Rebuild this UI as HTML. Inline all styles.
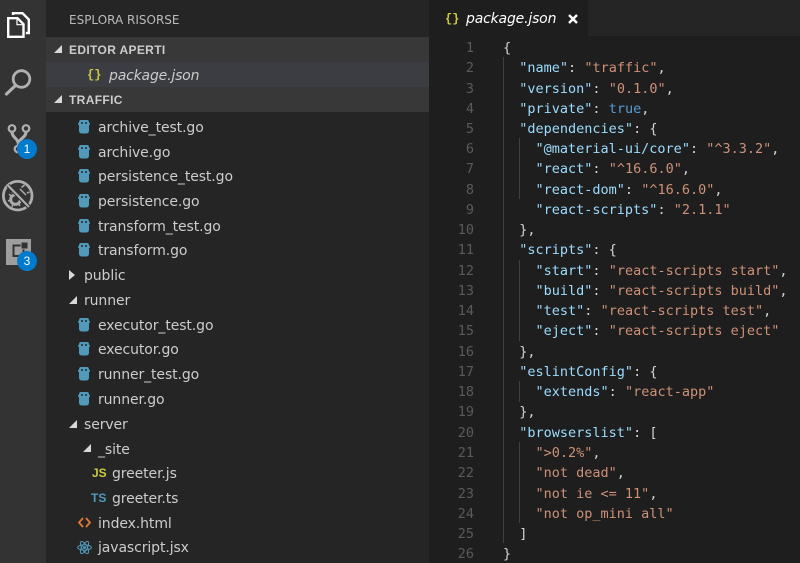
<!DOCTYPE html>
<html><head><meta charset="utf-8"><style>
html,body{margin:0;padding:0;background:#1e1e1e}
#app{position:relative;width:800px;height:563px;overflow:hidden;background:#1e1e1e;font-family:"DejaVu Sans",sans-serif}
.abs{position:absolute}
.row{position:absolute;color:#ccc;font-size:14px;line-height:20px;white-space:nowrap;font-family:"DejaVu Sans",sans-serif;letter-spacing:-.1px;margin-top:1px}
.ln{position:absolute;left:430px;width:44px;text-align:right;color:#5a5a5a;font:13.5px/20px "DejaVu Sans Mono",monospace;margin-top:1px}
.c{position:absolute;left:503px;color:#d4d4d4;font:13.5px/20px "DejaVu Sans Mono",monospace;white-space:pre;margin-top:1px}
.k{color:#9cdcfe}.s{color:#ce9178}.b{color:#569cd6}
.g{position:absolute;width:1px;background:#404040}
.tri{position:absolute;width:0;height:0}
.open{border-left:8px solid transparent;border-bottom:8px solid #d8d8d8}
.go{position:absolute;width:12px;height:16px}
.badge{position:absolute;width:20px;height:20px;border-radius:50%;background:#007acc;color:#fff;font:12px/20px "Liberation Sans",sans-serif;text-align:center}
.hd{font:bold 12px/20px "Liberation Sans",sans-serif;letter-spacing:.35px}
.br{font:bold 12px/20px "Liberation Mono",monospace;color:#cbcb41;letter-spacing:0}
</style></head><body><div id="app">
<div class="abs" style="left:0;top:0;width:46px;height:563px;background:#333"></div>
<div class="abs" style="left:46px;top:0;width:383px;height:563px;background:#252526"></div>
<div class="abs" style="left:588px;top:0;width:212px;height:36px;background:#252526"></div>

<svg class="abs" style="left:0;top:0" width="46" height="280" fill="none">
<path d="M13 15v-1.800h9.500l6.300 6.300v13.500h-3" stroke="#fff" stroke-width="2.400"/>
<path d="M8.200 18.200h9.300l6 6v12.600H8.200z" stroke="#fff" stroke-width="2.400"/>
<path d="M17 18.500v6.200h6.500" stroke="#fff" stroke-width="1.200"/>
<circle cx="21.500" cy="79" r="8.300" stroke="#b0b0b0" stroke-width="2.800"/>
<path d="M15.500 85.500L6.500 94" stroke="#b0b0b0" stroke-width="3.200" stroke-linecap="round"/>
<circle cx="12" cy="128.500" r="3.300" stroke="#b0b0b0" stroke-width="2.200"/>
<circle cx="26" cy="128.500" r="3.300" stroke="#b0b0b0" stroke-width="2.200"/>
<circle cx="18" cy="149" r="3.300" stroke="#b0b0b0" stroke-width="2.200"/>
<path d="M12 132c0 6 6.500 6 6.500 13M26 132c0 6-7.500 6-7.500 13" stroke="#b0b0b0" stroke-width="3"/>
<circle cx="17.700" cy="195.700" r="14.300" stroke="#adadad" stroke-width="2.800"/>
<circle cx="15.500" cy="199.500" r="4.800" stroke="#adadad" stroke-width="3"/>
<path d="M20 189l6 6M21.500 187.500l3-2.500M27 193l2.500-1M13 190l-1 3M9 194l2 2M8 201l3-1M12 207l1-3M20 206l-2-3M25 202l-4-1" stroke="#adadad" stroke-width="1.500"/>
<path d="M8 185.500l21 21.500" stroke="#333" stroke-width="4.200"/>
<path d="M8 185.500l21 21.500" stroke="#adadad" stroke-width="2.200"/>
<rect x="6" y="239" width="25" height="26" fill="#9e9e9e"/>
<rect x="13.500" y="245.500" width="10" height="10.500" fill="#9e9e9e" stroke="#333" stroke-width="2"/>
<rect x="21" y="242" width="7" height="7" fill="#333" stroke="#9e9e9e" stroke-width="1"/>
</svg>
<div class="badge" style="left:17px;top:139px">1</div>
<div class="badge" style="left:17px;top:251px">3</div>

<div class="row" style="left:69px;top:9px;font-size:12px;letter-spacing:0;color:#bbb">ESPLORA RISORSE</div>
<div class="abs" style="left:46px;top:37px;width:383px;height:25px;background:#383839"></div>
<div class="abs" style="left:46px;top:62px;width:383px;height:25px;background:#3c3d43"></div>
<div class="abs" style="left:46px;top:87px;width:383px;height:25px;background:#383839"></div>
<div class="tri open" style="left:54px;top:45px"></div>
<div class="row hd" style="left:69px;top:39px">EDITOR APERTI</div>
<div class="row br" style="left:87px;top:64px">{}</div>
<div class="row" style="left:109px;top:65px;font-style:italic;color:#ccc;letter-spacing:-.18px">package.json</div>
<div class="tri open" style="left:54px;top:95px"></div>
<div class="row hd" style="left:69px;top:89px">TRAFFIC</div>

<svg width="0" height="0" style="position:absolute"><defs><g id="go"><path d="M1 3.500Q1 1 3 1h6q2 0 2 2.500l1 1v1l-1 .5v5.500q0 3-3 3H4q-3 0-3-3V6L0 5.500v-1z" fill="#519aba"/><circle cx="4" cy="4" r="1" fill="#1e2a30"/><circle cx="8" cy="4" r="1" fill="#1e2a30"/></g></defs></svg>

<svg class="go" style="left:78px;top:119px" viewBox="0 0 12 16"><use href="#go"/></svg><div class="row" style="left:98px;top:117px">archive_test.go</div>
<svg class="go" style="left:78px;top:144px" viewBox="0 0 12 16"><use href="#go"/></svg><div class="row" style="left:98px;top:142px">archive.go</div>
<svg class="go" style="left:78px;top:168px" viewBox="0 0 12 16"><use href="#go"/></svg><div class="row" style="left:98px;top:166px">persistence_test.go</div>
<svg class="go" style="left:78px;top:193px" viewBox="0 0 12 16"><use href="#go"/></svg><div class="row" style="left:98px;top:191px">persistence.go</div>
<svg class="go" style="left:78px;top:218px" viewBox="0 0 12 16"><use href="#go"/></svg><div class="row" style="left:98px;top:216px">transform_test.go</div>
<svg class="go" style="left:78px;top:242px" viewBox="0 0 12 16"><use href="#go"/></svg><div class="row" style="left:98px;top:240px">transform.go</div>
<div class="tri" style="left:69px;top:270px;border-top:5px solid transparent;border-bottom:5px solid transparent;border-left:6px solid #d8d8d8"></div>
<div class="row" style="left:84px;top:265px">public</div>
<div class="tri open" style="left:69px;top:296px"></div>
<div class="row" style="left:84px;top:290px">runner</div>
<svg class="go" style="left:78px;top:317px" viewBox="0 0 12 16"><use href="#go"/></svg><div class="row" style="left:98px;top:315px">executor_test.go</div>
<svg class="go" style="left:78px;top:341px" viewBox="0 0 12 16"><use href="#go"/></svg><div class="row" style="left:98px;top:339px">executor.go</div>
<svg class="go" style="left:78px;top:366px" viewBox="0 0 12 16"><use href="#go"/></svg><div class="row" style="left:98px;top:364px">runner_test.go</div>
<svg class="go" style="left:78px;top:391px" viewBox="0 0 12 16"><use href="#go"/></svg><div class="row" style="left:98px;top:389px">runner.go</div>
<div class="tri open" style="left:69px;top:420px"></div>
<div class="row" style="left:84px;top:414px">server</div>
<div class="tri open" style="left:83px;top:444px"></div>
<div class="row" style="left:98px;top:439px">_site</div>
<div class="row" style="left:92px;top:462px;font:bold 12px/20px 'Liberation Sans',sans-serif;color:#cbcb41;letter-spacing:0">JS</div>
<div class="row" style="left:112px;top:463px">greeter.js</div>
<div class="row" style="left:91px;top:487px;font:bold 12px/20px 'Liberation Sans',sans-serif;color:#519aba;letter-spacing:0">TS</div>
<div class="row" style="left:112px;top:488px">greeter.ts</div>
<svg class="abs" style="left:78px;top:516px" width="13" height="13" fill="none" stroke="#e37933" stroke-width="1.800"><path d="M5 2L1 6.500 5 11M8 2l4 4.500L8 11"/></svg>
<div class="row" style="left:98px;top:513px">index.html</div>
<svg class="abs" style="left:77px;top:540px" width="15" height="15" fill="none" stroke="#519aba" stroke-width="1"><ellipse cx="7.500" cy="7.500" rx="6.800" ry="2.700"/><ellipse cx="7.500" cy="7.500" rx="6.800" ry="2.700" transform="rotate(60 7.500 7.500)"/><ellipse cx="7.500" cy="7.500" rx="6.800" ry="2.700" transform="rotate(120 7.500 7.500)"/><circle cx="7.500" cy="7.500" r="1" fill="#519aba"/></svg>
<div class="row" style="left:98px;top:537px">javascript.jsx</div>

<div class="row br" style="left:445px;top:8px">{}</div>
<div class="row" style="left:466px;top:8px;font-style:italic;color:#fff;letter-spacing:-.18px">package.json</div>
<svg class="abs" style="left:568px;top:14px" width="10" height="10" stroke="#fff" stroke-width="2.400"><path d="M1 1l8 8M9 1l-8 8"/></svg>

<div class="g" style="left:503px;top:57px;height:486px"></div>
<div class="g" style="left:519px;top:138px;height:61px"></div>
<div class="g" style="left:519px;top:260px;height:81px"></div>
<div class="g" style="left:519px;top:381px;height:21px"></div>
<div class="g" style="left:519px;top:442px;height:81px"></div>

<div class="ln" style="top:37px">1</div><div class="c" style="top:37px">{</div>
<div class="ln" style="top:57px">2</div><div class="c" style="top:57px">  <span class="k">"name"</span>: <span class="s">"traffic"</span>,</div>
<div class="ln" style="top:78px">3</div><div class="c" style="top:78px">  <span class="k">"version"</span>: <span class="s">"0.1.0"</span>,</div>
<div class="ln" style="top:98px">4</div><div class="c" style="top:98px">  <span class="k">"private"</span>: <span class="b">true</span>,</div>
<div class="ln" style="top:118px">5</div><div class="c" style="top:118px">  <span class="k">"dependencies"</span>: {</div>
<div class="ln" style="top:138px">6</div><div class="c" style="top:138px">    <span class="k">"@material-ui/core"</span>: <span class="s">"^3.3.2"</span>,</div>
<div class="ln" style="top:158px">7</div><div class="c" style="top:158px">    <span class="k">"react"</span>: <span class="s">"^16.6.0"</span>,</div>
<div class="ln" style="top:179px">8</div><div class="c" style="top:179px">    <span class="k">"react-dom"</span>: <span class="s">"^16.6.0"</span>,</div>
<div class="ln" style="top:199px">9</div><div class="c" style="top:199px">    <span class="k">"react-scripts"</span>: <span class="s">"2.1.1"</span></div>
<div class="ln" style="top:219px">10</div><div class="c" style="top:219px">  },</div>
<div class="ln" style="top:239px">11</div><div class="c" style="top:239px">  <span class="k">"scripts"</span>: {</div>
<div class="ln" style="top:260px">12</div><div class="c" style="top:260px">    <span class="k">"start"</span>: <span class="s">"react-scripts start"</span>,</div>
<div class="ln" style="top:280px">13</div><div class="c" style="top:280px">    <span class="k">"build"</span>: <span class="s">"react-scripts build"</span>,</div>
<div class="ln" style="top:300px">14</div><div class="c" style="top:300px">    <span class="k">"test"</span>: <span class="s">"react-scripts test"</span>,</div>
<div class="ln" style="top:320px">15</div><div class="c" style="top:320px">    <span class="k">"eject"</span>: <span class="s">"react-scripts eject"</span></div>
<div class="ln" style="top:341px">16</div><div class="c" style="top:341px">  },</div>
<div class="ln" style="top:361px">17</div><div class="c" style="top:361px">  <span class="k">"eslintConfig"</span>: {</div>
<div class="ln" style="top:381px">18</div><div class="c" style="top:381px">    <span class="k">"extends"</span>: <span class="s">"react-app"</span></div>
<div class="ln" style="top:401px">19</div><div class="c" style="top:401px">  },</div>
<div class="ln" style="top:422px">20</div><div class="c" style="top:422px">  <span class="k">"browserslist"</span>: [</div>
<div class="ln" style="top:442px">21</div><div class="c" style="top:442px">    <span class="s">"&gt;0.2%"</span>,</div>
<div class="ln" style="top:462px">22</div><div class="c" style="top:462px">    <span class="s">"not dead"</span>,</div>
<div class="ln" style="top:483px">23</div><div class="c" style="top:483px">    <span class="s">"not ie &lt;= 11"</span>,</div>
<div class="ln" style="top:503px">24</div><div class="c" style="top:503px">    <span class="s">"not op_mini all"</span></div>
<div class="ln" style="top:523px">25</div><div class="c" style="top:523px">  ]</div>
<div class="ln" style="top:543px">26</div><div class="c" style="top:543px">}</div>
</div></body></html>
